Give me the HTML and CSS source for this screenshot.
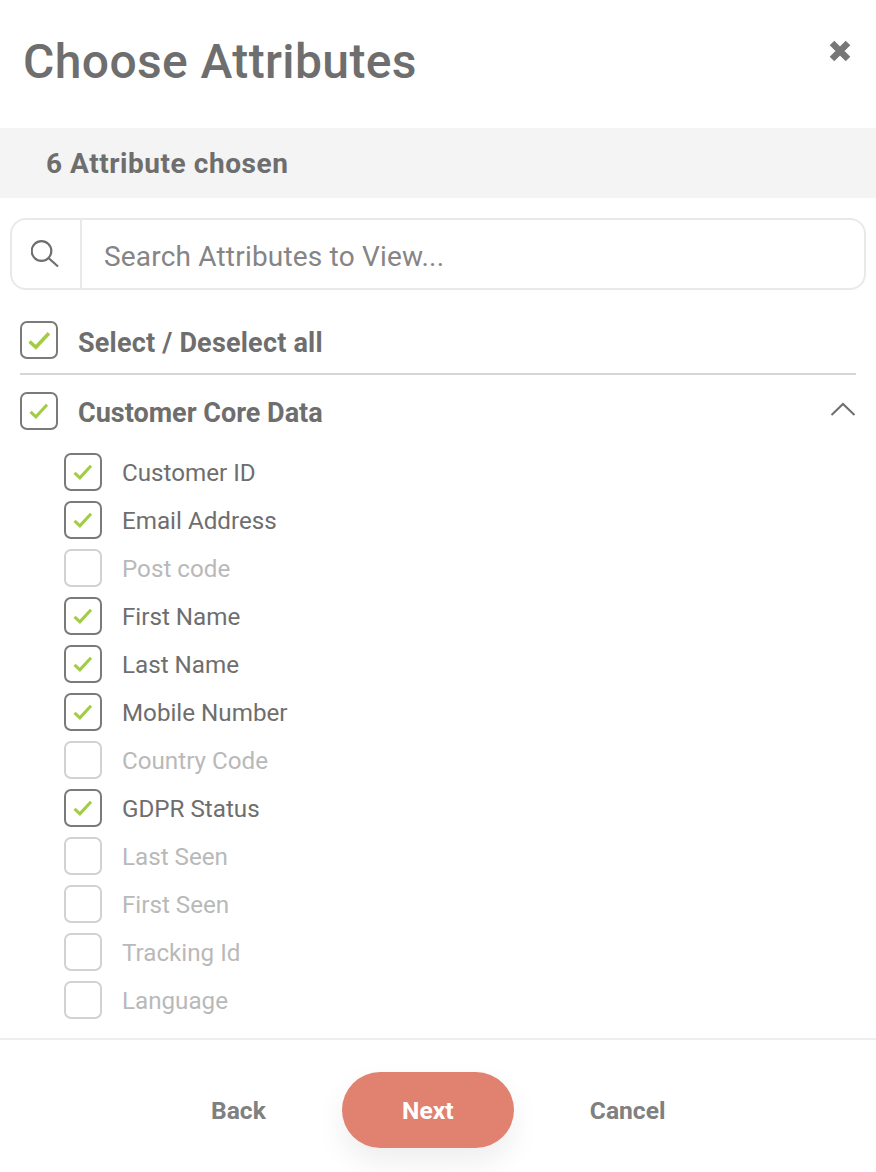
FILE: index.html
```html
<!DOCTYPE html>
<html lang="en">
<head>
<meta charset="utf-8">
<title>Choose Attributes</title>
<link rel="stylesheet" href="styles.css">
</head>
<body>
<div class="dialog">
  <header class="head">
    <h1 class="title">Choose Attributes</h1>
    <svg class="close" width="24" height="24" viewBox="0 0 24 24"><path d="M4 4 20 20M20 4 4 20" stroke="#777" stroke-width="6.5" fill="none"/></svg>
  </header>
  <div class="chosen">6 Attribute chosen</div>
  <div class="search">
    <span class="search-icon"><svg width="30" height="30" viewBox="0 0 30 30" fill="none" stroke="#6e6e6e" stroke-width="2.200"><circle cx="10.500" cy="12" r="9.800"/><path d="M17.500 19 27 27.500"/></svg></span>
    <span class="search-text">Search Attributes to View...</span>
  </div>
  <div class="row row-all">
    <span class="box on"><svg class="tick tick-lg" viewBox="0 0 22 18"><path d="M1.500 10 7.500 15.500 20 2" /></svg></span>
    <span class="label-b label-all">Select / Deselect all</span>
  </div>
  <div class="row row-group">
    <span class="box on"><svg class="tick" viewBox="0 0 22 18"><path d="M1.500 10 7.500 15.500 20 2" /></svg></span>
    <span class="label-b">Customer Core Data</span>
    <svg class="chev" width="26" height="14" viewBox="0 0 26 14" fill="none" stroke="#6e6e6e" stroke-width="2"><path d="M1.500 13 13 2 24.500 13"/></svg>
  </div>
  <ul class="list">
    <li class="item"><span class="box on"><svg class="tick" viewBox="0 0 22 18"><path d="M1.500 10 7.500 15.500 20 2" /></svg></span><span class="item-text">Customer ID</span></li>
    <li class="item"><span class="box on"><svg class="tick" viewBox="0 0 22 18"><path d="M1.500 10 7.500 15.500 20 2" /></svg></span><span class="item-text">Email Address</span></li>
    <li class="item off"><span class="box"></span><span class="item-text">Post code</span></li>
    <li class="item"><span class="box on"><svg class="tick" viewBox="0 0 22 18"><path d="M1.500 10 7.500 15.500 20 2" /></svg></span><span class="item-text">First Name</span></li>
    <li class="item"><span class="box on"><svg class="tick" viewBox="0 0 22 18"><path d="M1.500 10 7.500 15.500 20 2" /></svg></span><span class="item-text">Last Name</span></li>
    <li class="item"><span class="box on"><svg class="tick" viewBox="0 0 22 18"><path d="M1.500 10 7.500 15.500 20 2" /></svg></span><span class="item-text">Mobile Number</span></li>
    <li class="item off"><span class="box"></span><span class="item-text">Country Code</span></li>
    <li class="item"><span class="box on"><svg class="tick" viewBox="0 0 22 18"><path d="M1.500 10 7.500 15.500 20 2" /></svg></span><span class="item-text">GDPR Status</span></li>
    <li class="item off"><span class="box"></span><span class="item-text">Last Seen</span></li>
    <li class="item off"><span class="box"></span><span class="item-text">First Seen</span></li>
    <li class="item off"><span class="box"></span><span class="item-text">Tracking Id</span></li>
    <li class="item off"><span class="box"></span><span class="item-text">Language</span></li>
  </ul>
  <footer class="foot">
    <span class="link link-back">Back</span>
    <span class="next">Next</span>
    <span class="link link-cancel">Cancel</span>
  </footer>
</div>
</body>
</html>
```
FILE: styles.css
```css
* { box-sizing: border-box; }
html, body { margin: 0; padding: 0; background: #fff; }
body { font-family: "Roboto", "Liberation Sans", sans-serif; color: #6e6e6e; }
.dialog { width: 876px; height: 1172px; overflow: hidden; display: flex; flex-direction: column; }
.head { height: 128px; padding: 0 24px 5px 23px; display: flex; align-items: center; justify-content: space-between; flex-shrink: 0; }
.title { margin: 0; font-size: 48px; font-weight: 500; line-height: 56px; color: #6e6e6e; letter-spacing: .38px; }
.close { margin-top: -22px; }
.chosen { height: 70px; background: #f4f4f4; padding-left: 46px; display: flex; align-items: center; font-size: 28px; font-weight: 700; letter-spacing: .55px; flex-shrink: 0; }
.search { height: 72px; margin: 20px 10px 0; border: 2px solid #e9e9e9; border-radius: 16px; display: flex; flex-shrink: 0; }
.search-icon { width: 70px; border-right: 2px solid #e9e9e9; display: flex; align-items: center; justify-content: center; }
.search-text { padding: 4px 0 0 22px; display: flex; align-items: center; font-size: 28px; color: #858585; letter-spacing: .19px; }
.row { display: flex; align-items: center; gap: 20px; flex-shrink: 0; margin-left: 20px; }
.row-all { margin-top: 32px; height: 53px; width: 836px; padding-bottom: 15px; border-bottom: 2px solid #d6d6d6; }
.row-group { margin-top: 17px; height: 38px; margin-right: 20px; }
.chev { margin-left: auto; margin-top: -4px; }
.label-b { font-size: 27px; font-weight: 700; padding-top: 4px; }
.label-all { padding-top: 6px; letter-spacing: .2px; }
.box { width: 38px; height: 38px; border: 2px solid #7a7a7a; border-radius: 7px; display: flex; align-items: center; justify-content: center; flex-shrink: 0; }
.tick { width: 20px; height: 16px; fill: none; stroke: #a2cc44; stroke-width: 3.4; }
.tick-lg { width: 23px; height: 19px; }
.list { list-style: none; margin: 18px 0 0; padding: 0 0 0 64px; flex-shrink: 0; }
.item { height: 48px; display: flex; align-items: center; gap: 20px; font-size: 24.2px; color: #6e6e6e; }
.item-text { padding-top: 2px; }
.item.off { color: #b9b9b9; }
.item.off .box { border-color: #d2d2d2; }
.foot { margin-top: 14px; border-top: 2px solid #eeeef2; height: 133px; display: flex; align-items: flex-start; padding-top: 32px; padding-left: 211px; flex-shrink: 0; font-size: 24.6px; font-weight: 700; }
.link { color: #808080; height: 76px; display: flex; align-items: center; }
.next { width: 172px; height: 76px; margin-left: 76px; border-radius: 38px; background: #e0826f; color: #fff; display: flex; align-items: center; justify-content: center; box-shadow: 0 14px 30px rgba(0,0,0,.07); }
.link-cancel { margin-left: 76px; }
```
